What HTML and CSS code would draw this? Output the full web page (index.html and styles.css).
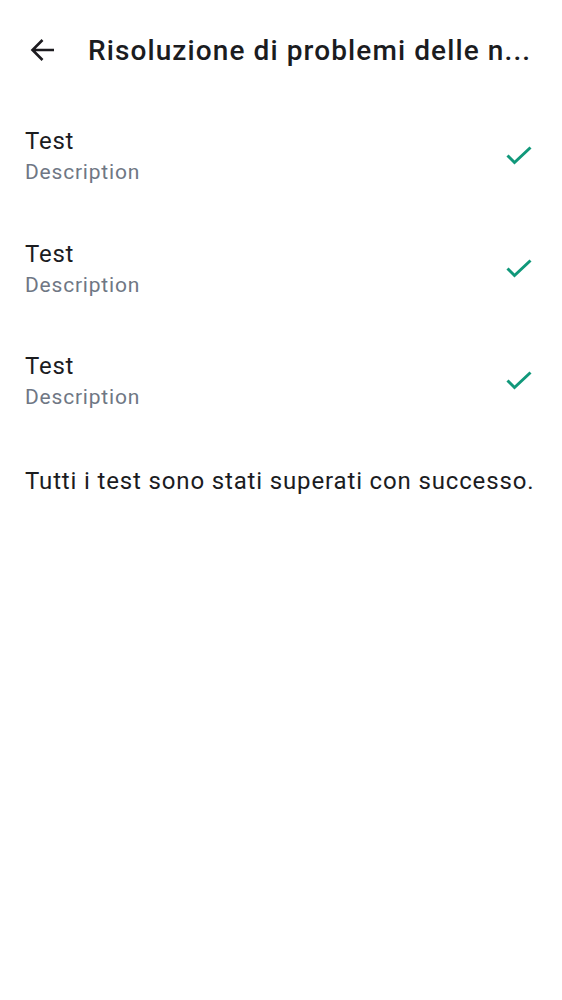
FILE: index.html
```html
<!DOCTYPE html>
<html lang="it">
<head>
<meta charset="utf-8">
<link rel="stylesheet" href="styles.css">
</head>
<body>
<div class="app">
  <header class="toolbar">
    <span class="back">
      <svg width="26" height="26" viewBox="0 0 26 26"><path d="M24 13H2.5M12.5 3L2.5 13l10 10" fill="none" stroke="#1c1b1f" stroke-width="2.6"/></svg>
    </span>
    <h1 class="title">Risoluzione di problemi delle n...</h1>
  </header>
  <ul class="tests">
    <li class="test">
      <div class="texts"><div class="name">Test</div><div class="desc">Description</div></div>
      <svg class="check" width="26" height="20" viewBox="0 0 26 20"><path d="M1.5 9.5l7 7L24.5 1.5" fill="none" stroke="#10987a" stroke-width="3"/></svg>
    </li>
    <li class="test">
      <div class="texts"><div class="name">Test</div><div class="desc">Description</div></div>
      <svg class="check" width="26" height="20" viewBox="0 0 26 20"><path d="M1.5 9.5l7 7L24.5 1.5" fill="none" stroke="#10987a" stroke-width="3"/></svg>
    </li>
    <li class="test">
      <div class="texts"><div class="name">Test</div><div class="desc">Description</div></div>
      <svg class="check" width="26" height="20" viewBox="0 0 26 20"><path d="M1.5 9.5l7 7L24.5 1.5" fill="none" stroke="#10987a" stroke-width="3"/></svg>
    </li>
  </ul>
  <p class="result">Tutti i test sono stati superati con successo.</p>
</div>
</body>
</html>
```
FILE: styles.css
```css
html, body { margin: 0; padding: 0; background: #fff; }
body { font-family: Roboto, "Noto Sans", sans-serif; color: #1b1c1f; }
.app { width: 562px; }
.toolbar {
  display: flex; align-items: center;
  height: 100px; box-sizing: border-box;
  padding: 0 28px 0 30px;
}
.back { display: flex; width: 58px; flex: none; }
.title {
  margin: 0; font-size: 28px; font-weight: 500; letter-spacing: 1.1px;
  white-space: nowrap; color: #1b1c1f;
}
.tests { list-style: none; margin: 0; padding: 0; }
.test {
  display: flex; align-items: center; justify-content: space-between;
  height: 112.5px; box-sizing: border-box; padding: 0 30px 0 25px;
}
.texts { display: flex; flex-direction: column; }
.name { font-size: 24px; line-height: 32px; letter-spacing: 0.75px; color: #1b1c1f; }
.desc { font-size: 21px; line-height: 30px; color: #6f7784; letter-spacing: 0.8px; }
.check { flex: none; }
.result { margin: 0; padding: 27px 25px; font-size: 24px; line-height: 32px; letter-spacing: 0.85px; color: #1b1c1f; }
```
